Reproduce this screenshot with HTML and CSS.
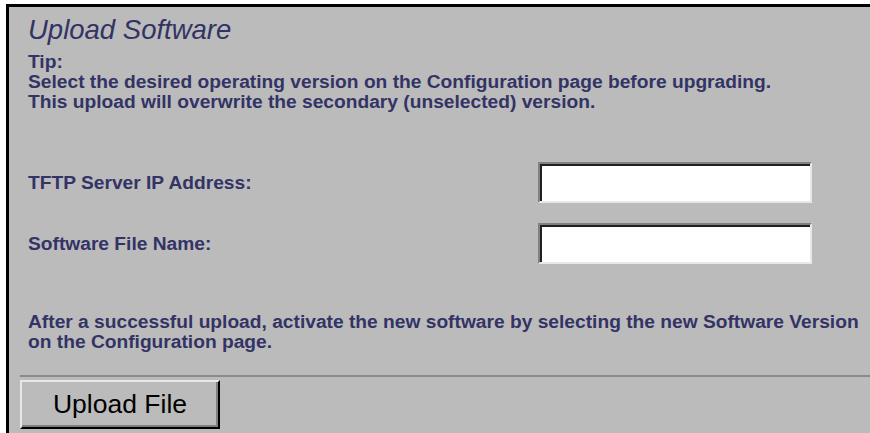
FILE: index.html
```html
<!DOCTYPE html>
<html>
<head>
<meta charset="utf-8">
<title>Upload Software</title>
<link rel="stylesheet" href="styles.css">
</head>
<body>
<div class="panel">
  <div class="content">
    <h1 class="title">Upload Software</h1>
    <p class="tip">Tip:<br>Select the desired operating version on the Configuration page before upgrading.<br>This upload will overwrite the secondary (unselected) version.</p>
    <div class="fields">
      <label class="label" for="tftp">TFTP Server IP Address:</label>
      <input class="field" id="tftp" type="text">
      <label class="label" for="fname">Software File Name:</label>
      <input class="field" id="fname" type="text">
    </div>
    <p class="note">After a successful upload, activate the new software by selecting the new Software Version<br>on the Configuration page.</p>
  </div>
  <div class="actions">
    <button class="btn" type="button">Upload File</button>
  </div>
</div>
</body>
</html>
```

FILE: styles.css
```css
html, body {
  margin: 0;
  padding: 0;
  background: #ffffff;
  height: 100%;
  overflow: hidden;
}

.panel {
  margin: 4px 0 0 6px;
  border-top: 3px solid #000;
  border-left: 3px solid #000;
  background: #bbbbbb;
  height: 426px;
  font-family: "Liberation Sans", Arial, sans-serif;
  color: #333366;
}

.content {
  padding: 8px 0 0 19px;
  white-space: nowrap;
}

.title {
  margin: 0 0 7px;
  font-size: 27.5px;
  font-weight: normal;
  font-style: italic;
  line-height: 30px;
}

.tip {
  margin: 0;
  font-size: 19.2px;
  font-weight: bold;
  line-height: 20px;
}

.fields {
  display: grid;
  grid-template-columns: 510px 274px;
  row-gap: 20px;
  align-items: center;
  margin-top: 50px;
}

.label {
  font-size: 19.2px;
  font-weight: bold;
}

.field {
  box-sizing: border-box;
  width: 274px;
  height: 41px;
  margin: 0;
  background: #fff;
  border-style: solid;
  border-width: 2px;
  border-color: #808080 #e8e8e8 #e8e8e8 #808080;
  box-shadow: inset 2px 2px 0 #202020;
  outline: none;
}

.note {
  margin: 48px 0 0;
  font-size: 19.2px;
  font-weight: bold;
  line-height: 20px;
}

.actions {
  margin: 23px 0 0 11px;
  border-top: 2px solid #8a8a8a;
  padding-top: 3px;
}

.btn {
  box-sizing: border-box;
  width: 200px;
  height: 49px;
  margin: 0;
  padding: 0;
  background: #bbbbbb;
  font-family: "Liberation Sans", Arial, sans-serif;
  font-size: 26.5px;
  color: #000;
  border-style: solid;
  border-width: 2px;
  border-color: #e8e8e8 #000 #000 #e8e8e8;
  box-shadow: inset -2px -2px 0 #808080;
}
```
